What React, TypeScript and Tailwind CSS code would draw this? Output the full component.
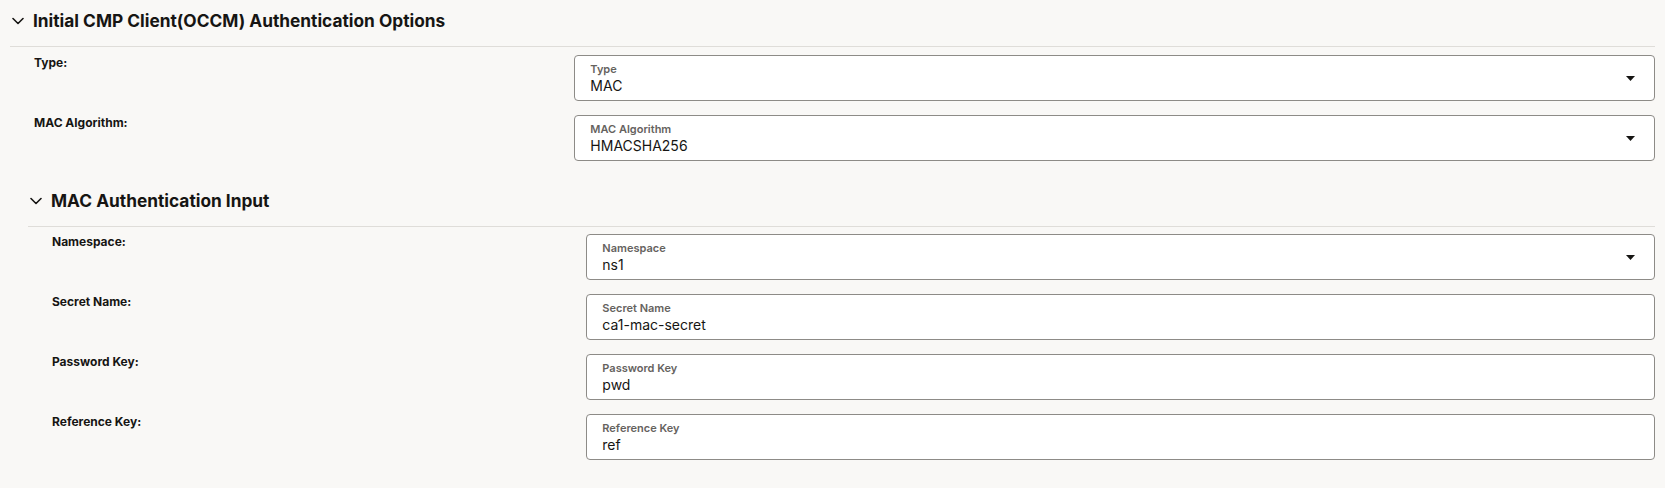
import React from "react";

function Chevron() {
  return (
    <svg width="12" height="8" viewBox="0 0 12 8" className="shrink-0 ml-[2px] mr-[9px]">
      <path d="M1 1.5 L6 6.5 L11 1.5" fill="none" stroke="#161513" strokeWidth="1.6" strokeLinecap="round" strokeLinejoin="round" />
    </svg>
  );
}

function Caret() {
  return (
    <svg width="9" height="5" viewBox="0 0 9 5" className="shrink-0">
      <path d="M0 0 L9 0 L4.5 5 Z" fill="#161513" />
    </svg>
  );
}

function Field({ label, value, select }: { label: string; value: string; select?: boolean }) {
  return (
    <div className="h-[46px] bg-white border border-[#8d8b87] rounded-[4px] flex items-center pl-[15px] pr-[19px]">
      <div className="flex-1 flex flex-col pt-[2px]">
        <div className="text-[11px] leading-[12px] font-semibold text-[#65625e]">{label}</div>
        <div className="text-[14px] leading-[18px] text-[#161513] mt-[2px]">{value}</div>
      </div>
      {select && <Caret />}
    </div>
  );
}

function Row({ label, value, select }: { label: string; value: string; select?: boolean }) {
  return (
    <div className="grid grid-cols-[1fr_2fr]">
      <div className="text-[12px] leading-[16px] font-bold text-[#161513]">{label}</div>
      <Field label={label.replace(":", "")} value={value} select={select} />
    </div>
  );
}

function Header({ title }: { title: string }) {
  return (
    <div className="h-[47px] pb-[5px] border-b border-[#dfddd9] flex items-center">
      <Chevron />
      <span className="text-[17.3px] leading-[24px] font-bold text-[#161513]">{title}</span>
    </div>
  );
}

export default function App() {
  return (
    <div className="w-[1665px] h-[488px] bg-[#f9f8f6] font-['Inter',sans-serif] overflow-hidden">
      <div className="mx-[10px]">
        <Header title="Initial CMP Client(OCCM) Authentication Options" />
        <div className="pl-[24px] pt-[8px] flex flex-col gap-[14px]">
          <Row label="Type:" value="MAC" select />
          <Row label="MAC Algorithm:" value="HMACSHA256" select />
        </div>
        <div className="ml-[18px] mt-[19px]">
          <Header title="MAC Authentication Input" />
          <div className="pl-[24px] pt-[7px] flex flex-col gap-[14px]">
            <Row label="Namespace:" value="ns1" select />
            <Row label="Secret Name:" value="ca1-mac-secret" />
            <Row label="Password Key:" value="pwd" />
            <Row label="Reference Key:" value="ref" />
          </div>
        </div>
      </div>
    </div>
  );
}
